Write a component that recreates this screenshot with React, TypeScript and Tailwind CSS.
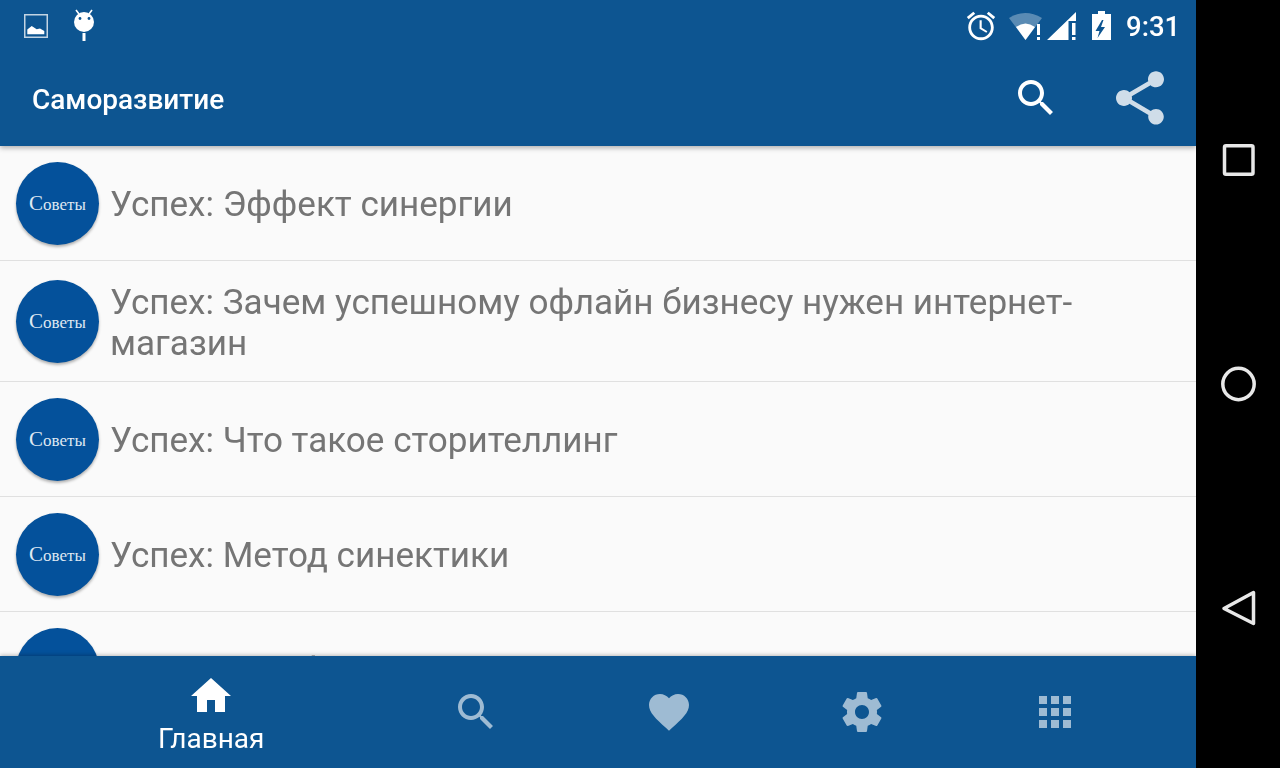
const articles = [
  "Успех: Эффект синергии",
  "Успех: Зачем успешному офлайн бизнесу нужен интернет-магазин",
  "Успех: Что такое сторителлинг",
  "Успех: Метод синектики",
  "Успех: Ваш фокус",
];

const paths = {
  search:
    "M15.5 14h-.79l-.28-.27C15.41 12.59 16 11.11 16 9.5 16 5.91 13.09 3 9.5 3S3 5.91 3 9.5 5.91 16 9.5 16c1.61 0 3.09-.59 4.23-1.57l.27.28v.79l5 4.99L20.49 19l-4.99-5zm-6 0C7.01 14 5 11.99 5 9.5S7.01 5 9.5 5 14 7.01 14 9.5 11.99 14 9.5 14z",
  share:
    "M18 16.08c-.76 0-1.44.3-1.96.77L8.91 12.7c.05-.23.09-.46.09-.7s-.04-.47-.09-.7l7.05-4.11c.54.5 1.25.81 2.04.81 1.66 0 3-1.34 3-3s-1.34-3-3-3-3 1.34-3 3c0 .24.04.47.09.7L8.04 9.81C7.5 9.31 6.79 9 6 9c-1.66 0-3 1.34-3 3s1.34 3 3 3c.79 0 1.5-.31 2.04-.81l7.12 4.16c-.05.21-.08.43-.08.65 0 1.61 1.31 2.92 2.92 2.92 1.61 0 2.92-1.31 2.92-2.92s-1.31-2.92-2.92-2.92z",
  home: "M10 20v-6h4v6h5v-8h3L12 3 2 12h3v8z",
  heart:
    "M12 21.35l-1.45-1.32C5.4 15.36 2 12.28 2 8.5 2 5.42 4.42 3 7.5 3c1.74 0 3.41.81 4.5 2.09C13.09 3.81 14.76 3 16.5 3 19.58 3 22 5.42 22 8.5c0 3.78-3.4 6.86-8.55 11.54L12 21.35z",
  gear:
    "M19.43 12.98c.04-.32.07-.64.07-.98s-.03-.66-.07-.98l2.11-1.65c.19-.15.24-.42.12-.64l-2-3.46c-.12-.22-.39-.3-.61-.22l-2.49 1c-.52-.4-1.08-.73-1.69-.98l-.38-2.65C14.46 2.18 14.25 2 14 2h-4c-.25 0-.46.18-.49.42l-.38 2.65c-.61.25-1.17.59-1.69.98l-2.49-1c-.23-.09-.49 0-.61.22l-2 3.46c-.13.22-.07.49.12.64l2.11 1.65c-.04.32-.07.65-.07.98s.03.66.07.98l-2.11 1.65c-.19.15-.24.42-.12.64l2 3.46c.12.22.39.3.61.22l2.49-1c.52.4 1.08.73 1.69.98l.38 2.65c.03.24.24.42.49.42h4c.25 0 .46-.18.49-.42l.38-2.65c.61-.25 1.17-.59 1.69-.98l2.49 1c.23.09.49 0 .61-.22l2-3.46c.12-.22.07-.49-.12-.64l-2.11-1.65zM12 15.5c-1.93 0-3.5-1.57-3.5-3.5s1.57-3.5 3.5-3.5 3.5 1.57 3.5 3.5-1.57 3.5-3.5 3.5z",
  apps: "M4 8h4V4H4v4zm6 12h4v-4h-4v4zm-6 0h4v-4H4v4zm0-6h4v-4H4v4zm6 0h4v-4h-4v4zm6-10v4h4V4h-4zm-6 4h4V4h-4v4zm6 6h4v-4h-4v4zm0 6h4v-4h-4v4z",
  alarm:
    "M22 5.72l-4.6-3.86-1.29 1.53 4.6 3.86L22 5.72zM7.88 3.39L6.6 1.86 2 5.71l1.29 1.53 4.59-3.85zM12.5 8H11v6l4.75 2.85.75-1.23-4-2.37V8zM12 4c-4.97 0-9 4.03-9 9s4.02 9 9 9c4.97 0 9-4.03 9-9s-4.03-9-9-9zm0 16c-3.87 0-7-3.13-7-7s3.13-7 7-7 7 3.13 7 7-3.13 7-7 7z",
};

const MdIcon = ({ d, className }: { d: string; className: string }) => (
  <svg viewBox="0 0 24 24" fill="currentColor" className={className}>
    <path d={d} />
  </svg>
);

const ImageNote = () => (
  <svg viewBox="0 0 24 24" className="h-6 w-6" fill="none">
    <rect x="0.75" y="0.75" width="22.5" height="22.5" stroke="#ffffff" strokeOpacity="0.75" strokeWidth="1.5" />
    <path d="M3.3 19.8V15.5L7.7 12L12.7 15.3L16 14.5L20.3 17V20.3H3.3Z" fill="#ffffff" />
  </svg>
);

const AndroidNote = () => (
  <svg viewBox="0 0 24 32" className="ml-[24px] mt-[-3px] h-8 w-6">
    <path d="M4 1L7 5M20 1L17 5" stroke="#ffffff" strokeWidth="1.6" />
    <circle cx="12" cy="13" r="10" fill="#ffffff" />
    <circle cx="8" cy="9.5" r="1.4" fill="#0d5591" />
    <circle cx="17" cy="9.5" r="1.4" fill="#0d5591" />
    <rect x="10.5" y="24" width="3" height="8" fill="#ffffff" />
  </svg>
);

const WifiIcon = () => (
  <svg viewBox="0 0 36 30" className="h-[30px] w-9">
    <path d="M1 7Q17-3 34 7L17.5 29Z" fill="#ffffff" fillOpacity="0.32" />
    <path d="M8 16Q17.5 9 27 16L17.5 29Z" fill="#ffffff" />
    <rect x="29" y="13" width="3" height="11" fill="#ffffff" />
    <rect x="29" y="26" width="3" height="3" fill="#ffffff" />
  </svg>
);

const SignalIcon = () => (
  <svg viewBox="0 0 30 30" className="h-[30px] w-[30px]">
    <path d="M0 29L29 1V10H21.5V29Z" fill="#ffffff" />
    <rect x="25" y="12" width="3.5" height="12" fill="#ffffff" />
    <rect x="25" y="26" width="3.5" height="3" fill="#ffffff" />
  </svg>
);

const BatteryIcon = () => (
  <svg viewBox="0 0 19 30" className="h-[30px] w-[19px]">
    <path d="M6 0H13V3H19V29H0V3H6Z" fill="#ffffff" />
    <path d="M10 9L3.5 20H7.5L5.5 27L13 16H9L11.5 9Z" fill="#0d5591" />
  </svg>
);

const Avatar = () => (
  <div className="flex h-[83px] w-[83px] shrink-0 items-center justify-center rounded-full bg-[#04519b] shadow-[0_2px_3px_rgba(0,0,0,0.3)]">
    <span className="font-['Liberation_Serif',serif] text-[17px] leading-none text-[#dfe8f2]">
      <span className="text-[21px]">С</span>оветы
    </span>
  </div>
);

const TabIcon = ({ d }: { d: string }) => (
  <div className="flex w-[193px] items-center justify-center text-white/60">
    <MdIcon d={d} className="h-12 w-12" />
  </div>
);

export default function App() {
  return (
    <div className="flex h-[768px] w-[1280px] overflow-hidden bg-black font-['Roboto',sans-serif]">
      <div className="flex w-[1196px] flex-col">
        <header className="relative z-10 h-[146px] shrink-0 bg-[#0d5591] shadow-[0_2px_5px_rgba(0,0,0,0.3)]">
          <div className="flex h-[50px] items-center pl-6 pr-[16px] pt-[2px] text-white">
            <ImageNote />
            <AndroidNote />
            <MdIcon d={paths.alarm} className="ml-auto h-[34px] w-[34px]" />
            <div className="ml-[10px]">
              <WifiIcon />
            </div>
            <div className="ml-[3px]">
              <SignalIcon />
            </div>
            <div className="ml-[15px]">
              <BatteryIcon />
            </div>
            <span className="ml-[15px] mt-[2px] text-[27.5px] font-medium will-change-transform">9:31</span>
          </div>
          <div className="flex h-[96px] items-center pl-8 text-white">
            <h1 className="mt-[4px] text-[28px] font-medium will-change-transform">Саморазвитие</h1>
            <MdIcon d={paths.search} className="ml-auto h-12 w-12" />
            <MdIcon d={paths.share} className="ml-[48px] mr-[24px] h-16 w-16 text-white/80" />
          </div>
        </header>

        <main className="min-h-0 flex-1 overflow-hidden bg-[#fafafa]">
          {articles.map((title) => (
            <div
              key={title}
              className="flex min-h-[115px] items-center gap-[11px] border-b border-[#e0e0e0] pl-4 pr-[10px]"
            >
              <Avatar />
              <p
                className={
                  title.length > 40
                    ? "pb-[17px] pt-[21px] text-[35.1px] leading-[41px] text-[#757575] will-change-transform"
                    : "pb-[18px] pt-[20px] text-[35.1px] leading-[41px] text-[#757575] will-change-transform"
                }
              >
                {title}
              </p>
            </div>
          ))}
        </main>

        <nav className="relative z-10 flex h-[112px] shrink-0 bg-[#0d5591] px-[44.5px] shadow-[0_-1px_4px_rgba(0,0,0,0.25)]">
          <div className="mr-[2px] flex w-[333px] flex-col items-center pt-4 text-white">
            <MdIcon d={paths.home} className="h-12 w-12" />
            <span className="mt-[1px] text-[28px] leading-[36px] will-change-transform">Главная</span>
          </div>
          <TabIcon d={paths.search} />
          <TabIcon d={paths.heart} />
          <TabIcon d={paths.gear} />
          <TabIcon d={paths.apps} />
        </nav>
      </div>

      <aside className="grid h-full w-[84px] grid-rows-3 py-12 text-[#e8e8e8]">
        <div className="flex items-center justify-center">
          <svg viewBox="0 0 48 48" className="h-12 w-12" fill="none" stroke="currentColor" strokeWidth="3.5" strokeLinejoin="round">
            <rect x="10.5" y="9.7" width="28.5" height="28.5" rx="1.5" />
          </svg>
        </div>
        <div className="flex items-center justify-center">
          <svg viewBox="0 0 48 48" className="h-12 w-12" fill="none" stroke="currentColor" strokeWidth="3.5">
            <circle cx="24.5" cy="24" r="15.7" />
          </svg>
        </div>
        <div className="flex items-center justify-center">
          <svg viewBox="0 0 48 48" className="h-12 w-12" fill="none" stroke="currentColor" strokeWidth="3.5" strokeLinejoin="round">
            <path d="M39.5 8.5V39.5L10 24.5Z" />
          </svg>
        </div>
      </aside>
    </div>
  );
}
